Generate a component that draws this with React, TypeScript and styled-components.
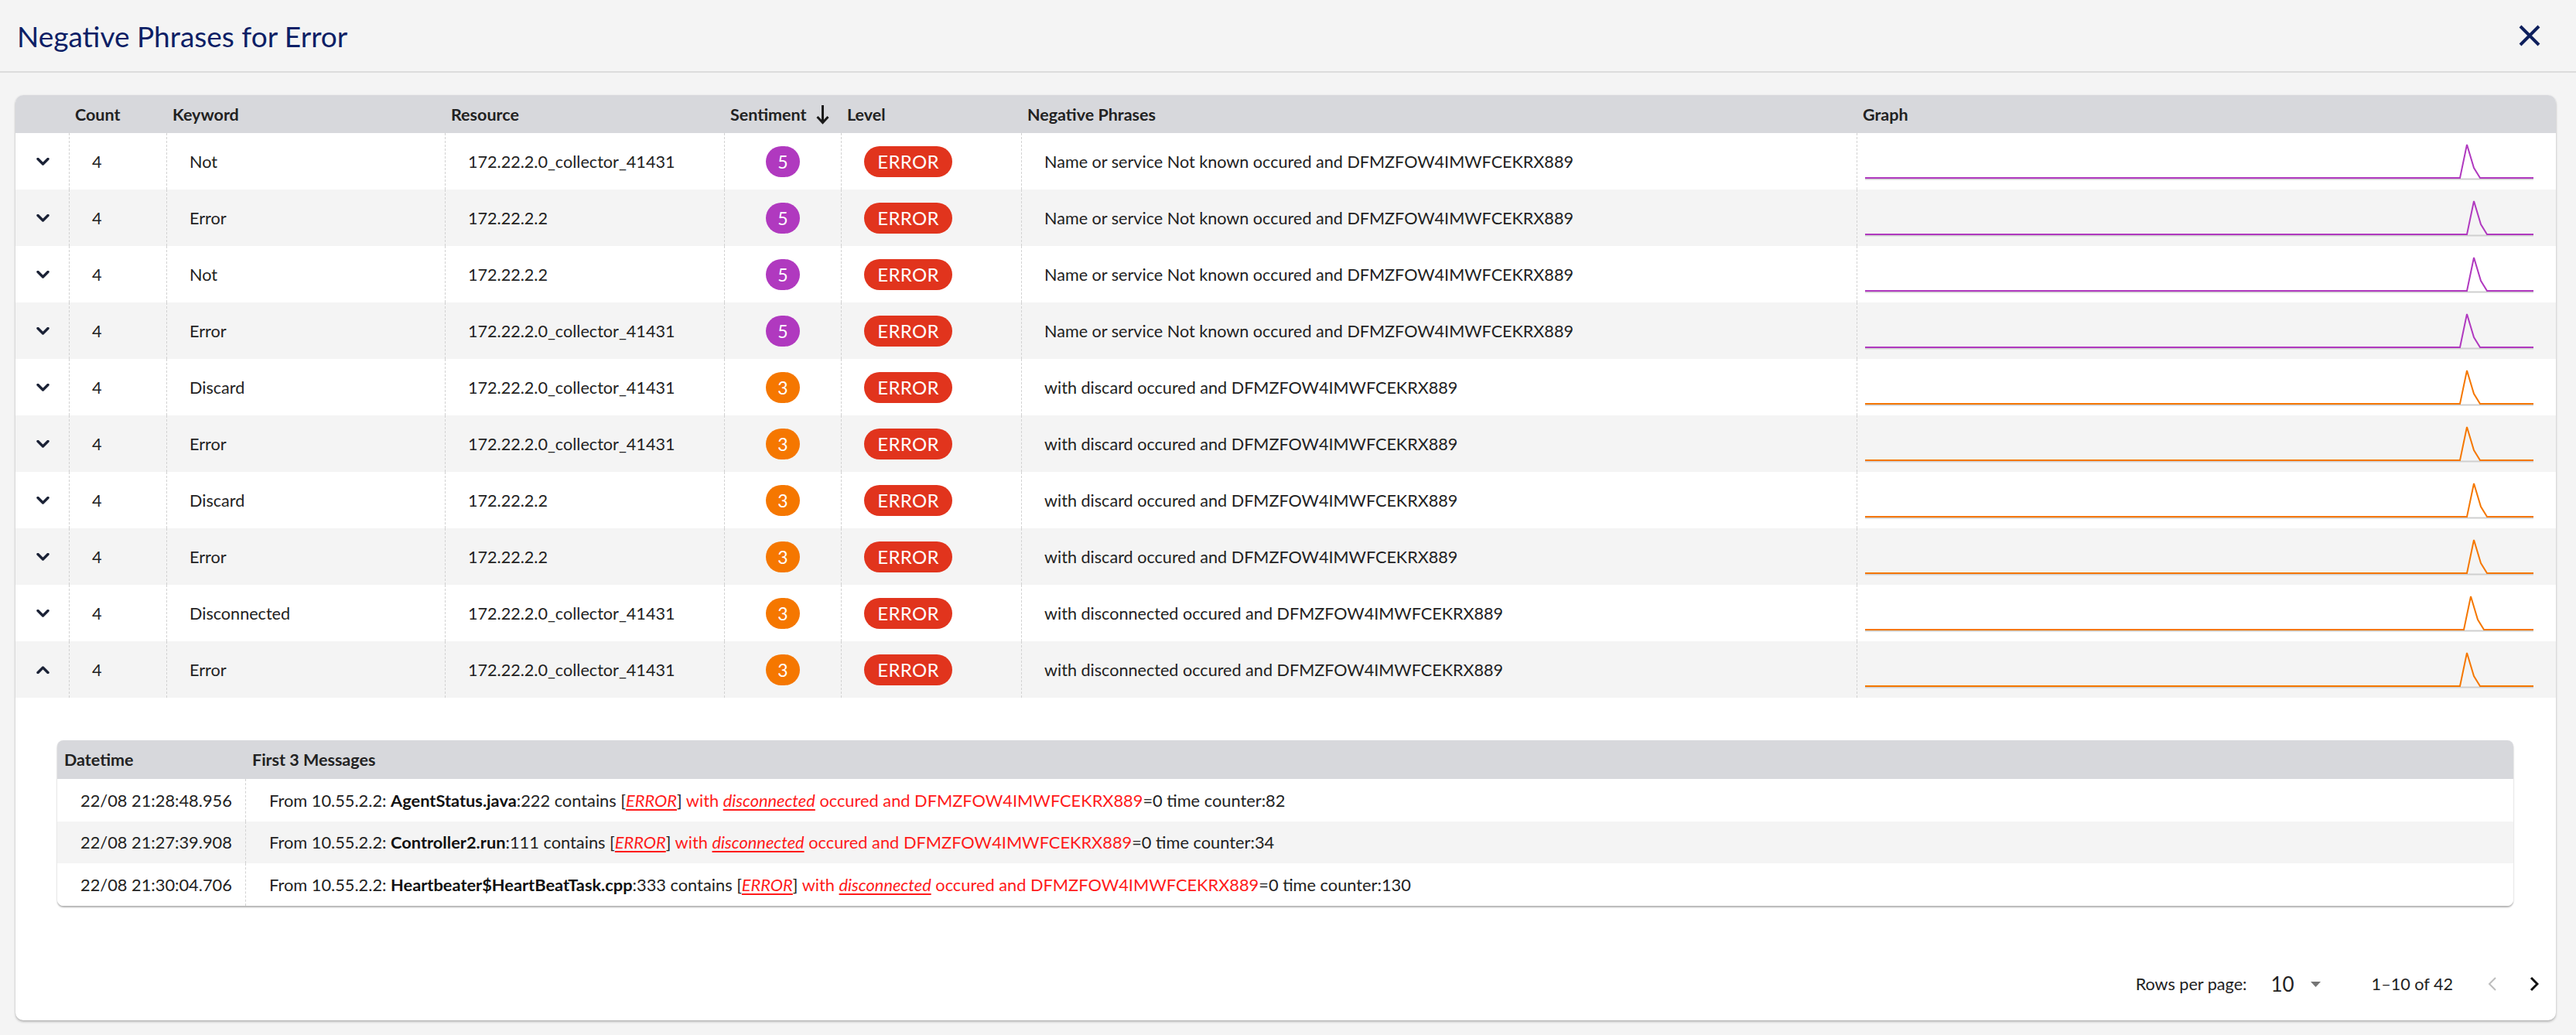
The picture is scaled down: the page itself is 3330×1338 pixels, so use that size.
import React from 'react';
import styled, { createGlobalStyle } from 'styled-components';

const GlobalStyle = createGlobalStyle`
  html, body {
    margin: 0;
    padding: 0;
    background: #f4f4f4;
    font-family: Lato, "Open Sans", Arial, sans-serif;
    color: #222;
  }
`;

const COLUMNS = '69px 126px 360px 361px 151px 233px 1080px 1fr';
const TEXT = '21.6px';

type Row = {
  keyword: string;
  resource: string;
  sentiment: number;
  phrase: string;
  spike: number;
};

const PHRASE_NAME = 'Name or service Not known occured and DFMZFOW4IMWFCEKRX889';
const PHRASE_DISCARD = 'with discard occured and DFMZFOW4IMWFCEKRX889';
const PHRASE_DISC = 'with disconnected occured and DFMZFOW4IMWFCEKRX889';
const COLLECTOR = '172.22.2.0_collector_41431';

const rows: Row[] = [
  { keyword: 'Not', resource: COLLECTOR, sentiment: 5, phrase: PHRASE_NAME, spike: 769 },
  { keyword: 'Error', resource: '172.22.2.2', sentiment: 5, phrase: PHRASE_NAME, spike: 778 },
  { keyword: 'Not', resource: '172.22.2.2', sentiment: 5, phrase: PHRASE_NAME, spike: 778 },
  { keyword: 'Error', resource: COLLECTOR, sentiment: 5, phrase: PHRASE_NAME, spike: 769 },
  { keyword: 'Discard', resource: COLLECTOR, sentiment: 3, phrase: PHRASE_DISCARD, spike: 769 },
  { keyword: 'Error', resource: COLLECTOR, sentiment: 3, phrase: PHRASE_DISCARD, spike: 769 },
  { keyword: 'Discard', resource: '172.22.2.2', sentiment: 3, phrase: PHRASE_DISCARD, spike: 778 },
  { keyword: 'Error', resource: '172.22.2.2', sentiment: 3, phrase: PHRASE_DISCARD, spike: 778 },
  { keyword: 'Disconnected', resource: COLLECTOR, sentiment: 3, phrase: PHRASE_DISC, spike: 774 },
  { keyword: 'Error', resource: COLLECTOR, sentiment: 3, phrase: PHRASE_DISC, spike: 769 },
];

const messages = [
  { time: '22/08 21:28:48.956', file: 'AgentStatus.java', line: '222', counter: '82' },
  { time: '22/08 21:27:39.908', file: 'Controller2.run', line: '111', counter: '34' },
  { time: '22/08 21:30:04.706', file: 'Heartbeater$HeartBeatTask.cpp', line: '333', counter: '130' },
];

const PURPLE = '#b039bf';
const ORANGE = '#f57700';

const TopBar = styled.header`
  height: 92px;
  display: flex;
  align-items: center;
  justify-content: space-between;
  padding: 0 46px 0 22px;
  border-bottom: 2px solid #dcdcdc;
`;

const Title = styled.h1`
  margin: 0;
  font-size: 37px;
  font-weight: 400;
  color: #0d1f66;
`;

const CloseButton = styled.button`
  border: 0;
  background: none;
  padding: 0;
  width: 28px;
  height: 28px;
  display: flex;
  cursor: pointer;
`;

const Content = styled.main`
  padding: 29px 26px 20px 20px;
`;

const Card = styled.section`
  background: #fff;
  border-radius: 10px;
  box-shadow: 0 2px 3px rgba(0, 0, 0, 0.25), 0 0 2px rgba(0, 0, 0, 0.08);
  overflow: hidden;
`;

const HeadRow = styled.div`
  display: grid;
  grid-template-columns: ${COLUMNS};
  height: 49px;
  background: #d7d8dc;
`;

const HeadCell = styled.div`
  display: flex;
  align-items: center;
  padding-left: 8px;
  font-size: 21.5px;
  font-weight: 700;
  color: #222;
`;

const BodyRow = styled.div<{ $shade: boolean }>`
  display: grid;
  grid-template-columns: ${COLUMNS};
  height: 73px;
  background: ${(p) => (p.$shade ? '#f4f4f4' : '#fff')};
`;

const Cell = styled.div<{ $first?: boolean; $center?: boolean; $pad?: number }>`
  display: flex;
  align-items: center;
  justify-content: ${(p) => (p.$center ? 'center' : 'flex-start')};
  padding-left: ${(p) => (p.$center ? 0 : p.$pad ?? 29)}px;
  border-left: ${(p) => (p.$first ? 'none' : '1px dashed #d2d2d2')};
  font-size: ${TEXT};
  color: #222;
  white-space: nowrap;
  overflow: hidden;
`;

const ExpandCell = styled(Cell)`
  padding-left: 27px;
`;

const Sentiment = styled.span<{ $color: string }>`
  width: 44px;
  height: 40px;
  border-radius: 20px;
  background: ${(p) => p.$color};
  color: #fff;
  font-size: 23px;
  display: flex;
  align-items: center;
  justify-content: center;
`;

const LevelPill = styled.span`
  width: 114px;
  height: 40px;
  border-radius: 20px;
  background: #e1341d;
  color: #fff;
  font-size: 24px;
  letter-spacing: 0.3px;
  display: flex;
  align-items: center;
  justify-content: center;
`;

const Expanded = styled.div`
  padding: 55px 55px 55px 54px;
`;

const SubTable = styled.div`
  border-radius: 8px;
  background: #fff;
  box-shadow: 0 2px 2px rgba(0, 0, 0, 0.3), 0 0 1px rgba(0, 0, 0, 0.1);
  overflow: hidden;
`;

const SUB_COLUMNS = '243px 1fr';

const SubHead = styled.div`
  display: grid;
  grid-template-columns: ${SUB_COLUMNS};
  height: 50px;
  background: #d7d8dc;
`;

const SubHeadCell = styled.div`
  display: flex;
  align-items: center;
  padding-left: 9px;
  font-size: 21.5px;
  font-weight: 700;
`;

const SubRow = styled.div<{ $shade: boolean }>`
  display: grid;
  grid-template-columns: ${SUB_COLUMNS};
  height: 54.5px;
  background: ${(p) => (p.$shade ? '#f4f4f4' : '#fff')};
`;

const SubCell = styled.div<{ $first?: boolean }>`
  display: flex;
  align-items: center;
  padding-left: 30px;
  border-left: ${(p) => (p.$first ? 'none' : '1px dashed #d2d2d2')};
  font-size: 21.8px;
  white-space: pre;
`;

const Bold = styled.b`
  font-weight: 700;
  color: #111;
`;

const Red = styled.span`
  color: #ff1a1a;
`;

const Flagged = styled.i`
  color: #ff1a1a;
  text-decoration: underline;
  text-decoration-thickness: 2px;
  text-underline-offset: 3px;
`;

const Pagination = styled.div`
  height: 93px;
  display: flex;
  align-items: center;
  justify-content: flex-end;
  padding-right: 22px;
  font-size: ${TEXT};
  color: #222;
`;

const RowsLabel = styled.span`
  margin-right: 31px;
`;

const RowsSelect = styled.div`
  display: flex;
  align-items: center;
  gap: 21px;
  font-size: 26px;
  margin-right: 66px;
`;

const Range = styled.span`
  margin-right: 45px;
`;

const PageButton = styled.button<{ $enabled: boolean }>`
  border: 0;
  background: none;
  padding: 0;
  width: 12px;
  height: 20px;
  display: flex;
  color: ${(p) => (p.$enabled ? '#111' : '#bdbdbd')};
  & + & {
    margin-left: 42px;
  }
`;

function Chevron({ up }: { up?: boolean }) {
  return (
    <svg width="17" height="10" viewBox="0 0 17 10">
      <polyline
        points={up ? '2,8.5 8.5,2 15,8.5' : '2,1.5 8.5,8 15,1.5'}
        fill="none"
        stroke="#1b2236"
        strokeWidth="3.4"
        strokeLinecap="round"
        strokeLinejoin="round"
      />
    </svg>
  );
}

function SortArrow() {
  return (
    <svg width="17" height="26" viewBox="0 0 17 26" style={{ marginLeft: 12 }}>
      <path d="M8.5 1 V23" stroke="#1a1a1a" strokeWidth="3" fill="none" />
      <path d="M1.5 16 L8.5 23.5 L15.5 16" stroke="#1a1a1a" strokeWidth="3" fill="none" />
    </svg>
  );
}

function Spark({ start, color }: { start: number; color: string }) {
  const base = 58;
  const pts = [
    `0,${base}`,
    `${start},${base}`,
    `${start + 9},15`,
    `${start + 18},45`,
    `${start + 26},${base}`,
    `864,${base}`,
  ].join(' ');
  return (
    <svg width="864" height="73" viewBox="0 0 864 73">
      <line x1="0" y1={base + 1.5} x2="864" y2={base + 1.5} stroke="#cfcfcf" strokeWidth="2" />
      <polyline points={pts} fill="none" stroke={color} strokeWidth="2" strokeLinejoin="miter" />
    </svg>
  );
}

export default function App() {
  return (
    <>
      <GlobalStyle />
      <TopBar>
        <Title>Negative Phrases for Error</Title>
        <CloseButton aria-label="close">
          <svg width="28" height="28" viewBox="0 0 28 28">
            <path d="M2 2 L26 26 M26 2 L2 26" stroke="#0d1f5c" strokeWidth="4" />
          </svg>
        </CloseButton>
      </TopBar>
      <Content>
        <Card>
          <HeadRow>
            <HeadCell />
            <HeadCell>Count</HeadCell>
            <HeadCell>Keyword</HeadCell>
            <HeadCell>Resource</HeadCell>
            <HeadCell>
              Sentiment
              <SortArrow />
            </HeadCell>
            <HeadCell>Level</HeadCell>
            <HeadCell>Negative Phrases</HeadCell>
            <HeadCell>Graph</HeadCell>
          </HeadRow>
          {rows.map((r, i) => {
            const color = r.sentiment === 5 ? PURPLE : ORANGE;
            return (
              <BodyRow key={i} $shade={i % 2 === 1}>
                <ExpandCell $first>
                  <Chevron up={i === rows.length - 1} />
                </ExpandCell>
                <Cell>4</Cell>
                <Cell>{r.keyword}</Cell>
                <Cell>{r.resource}</Cell>
                <Cell $center>
                  <Sentiment $color={color}>{r.sentiment}</Sentiment>
                </Cell>
                <Cell>
                  <LevelPill>ERROR</LevelPill>
                </Cell>
                <Cell>{r.phrase}</Cell>
                <Cell $pad={10}>
                  <Spark start={r.spike} color={color} />
                </Cell>
              </BodyRow>
            );
          })}
          <Expanded>
            <SubTable>
              <SubHead>
                <SubHeadCell>Datetime</SubHeadCell>
                <SubHeadCell>First 3 Messages</SubHeadCell>
              </SubHead>
              {messages.map((m, i) => (
                <SubRow key={i} $shade={i % 2 === 1}>
                  <SubCell $first>{m.time}</SubCell>
                  <SubCell>
                    From 10.55.2.2: <Bold>{m.file}</Bold>:{m.line} contains [<Flagged>ERROR</Flagged>]
                    <Red> with </Red>
                    <Flagged>disconnected</Flagged>
                    <Red> occured and DFMZFOW4IMWFCEKRX889</Red>=0 time counter:{m.counter}
                  </SubCell>
                </SubRow>
              ))}
            </SubTable>
          </Expanded>
          <Pagination>
            <RowsLabel>Rows per page:</RowsLabel>
            <RowsSelect>
              10
              <svg width="13" height="7" viewBox="0 0 13 7">
                <path d="M0 0 H13 L6.5 7 Z" fill="#757575" />
              </svg>
            </RowsSelect>
            <Range>1–10 of 42</Range>
            <PageButton $enabled={false} aria-label="previous page">
              <svg width="12" height="20" viewBox="0 0 12 20">
                <polyline points="10,2 2,10 10,18" fill="none" stroke="currentColor" strokeWidth="2" />
              </svg>
            </PageButton>
            <PageButton $enabled aria-label="next page">
              <svg width="12" height="20" viewBox="0 0 12 20">
                <polyline points="2,2 10,10 2,18" fill="none" stroke="currentColor" strokeWidth="3" />
              </svg>
            </PageButton>
          </Pagination>
        </Card>
      </Content>
    </>
  );
}
